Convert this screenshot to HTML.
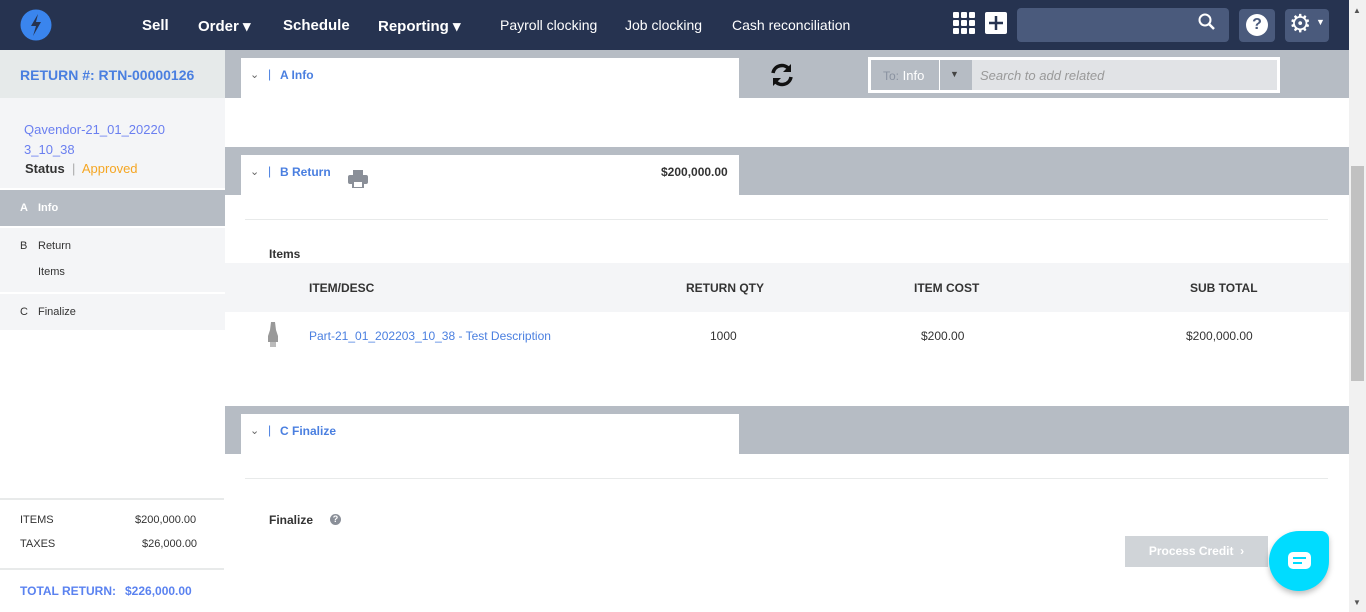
<!DOCTYPE html>
<html><head><style>
*{margin:0;padding:0;box-sizing:border-box}
body{width:1366px;height:612px;overflow:hidden;font-family:"Liberation Sans",sans-serif;background:#fff;position:relative;font-size:12px;color:#333}
.a{position:absolute}
.nav{left:0;top:0;width:1349px;height:50px;background:#263350}
.nv{color:#fff;font-weight:bold;font-size:15px;top:17px}
.nl{color:#fff;font-size:14px;top:17px}
.gb{background:#b6bcc4;left:225px;width:1124px;height:48px}
.tab{background:#fff;left:241px;width:498px;height:40px}
.tt{color:#4a7fe0;font-weight:bold;font-size:12px}
.ch{color:#666;font-size:11px}
.hr{background:#e8eaea;height:1px;left:245px;width:1083px}
.th{font-weight:bold;font-size:12px;color:#333;top:281px}
.sb{font-size:11px;color:#333}
</style></head><body>
<div class="a nav"></div>
<svg class="a" style="left:20px;top:9px" width="32" height="32" viewBox="0 0 32 32"><circle cx="16" cy="16" r="15.5" fill="#3a85ee"/><path d="M18 5 L11 17 L16 17 L13 27 L21 13 L16 13 Z" fill="#263350"/></svg>
<div class="a nv" style="left:142px">Sell</div>
<div class="a nv" style="left:198px">Order ▾</div>
<div class="a nv" style="left:283px">Schedule</div>
<div class="a nv" style="left:378px">Reporting ▾</div>
<div class="a nl" style="left:500px">Payroll clocking</div>
<div class="a nl" style="left:625px">Job clocking</div>
<div class="a nl" style="left:732px">Cash reconciliation</div>
<svg class="a" style="left:953px;top:12px" width="22" height="22"><g fill="#fff"><rect x="0" y="0" width="6" height="6" rx="1"/><rect x="8" y="0" width="6" height="6" rx="1"/><rect x="16" y="0" width="6" height="6" rx="1"/><rect x="0" y="8" width="6" height="6" rx="1"/><rect x="8" y="8" width="6" height="6" rx="1"/><rect x="16" y="8" width="6" height="6" rx="1"/><rect x="0" y="16" width="6" height="6" rx="1"/><rect x="8" y="16" width="6" height="6" rx="1"/><rect x="16" y="16" width="6" height="6" rx="1"/></g></svg>
<svg class="a" style="left:985px;top:12px" width="22" height="22"><rect width="22" height="22" rx="2" fill="#fff"/><path d="M11 4V18M4 11H18" stroke="#263350" stroke-width="2.5"/></svg>
<div class="a" style="left:1017px;top:8px;width:212px;height:34px;background:#4a5a7c;border-radius:4px"></div>
<svg class="a" style="left:1198px;top:13px" width="18" height="18"><circle cx="7" cy="7" r="5.5" stroke="#fff" stroke-width="2" fill="none"/><path d="M11 11L16 16" stroke="#fff" stroke-width="2.5"/></svg>
<div class="a" style="left:1239px;top:9px;width:36px;height:33px;background:#4a5a7c;border-radius:4px"></div>
<div class="a" style="left:1246px;top:14px;width:22px;height:22px;border-radius:50%;background:#fff;color:#4a5a7c;font-weight:bold;font-size:16px;text-align:center;line-height:22px">?</div>
<div class="a" style="left:1285px;top:9px;width:44px;height:33px;background:#4a5a7c;border-radius:4px"></div>
<div class="a" style="left:1289px;top:9px;color:#fff;font-size:25px">⚙</div>
<div class="a" style="left:1316px;top:17px;color:#fff;font-size:9px">▼</div>
<!-- scrollbar -->
<div class="a" style="left:1349px;top:0;width:17px;height:612px;background:#f1f1f1"></div>
<div class="a" style="left:1351px;top:166px;width:13px;height:215px;background:#c1c1c1"></div>
<div class="a" style="left:1353px;top:6px;font-size:8px;color:#555">▲</div>
<div class="a" style="left:1353px;top:598px;font-size:8px;color:#555">▼</div>
<!-- sidebar -->
<div class="a" style="left:0;top:50px;width:225px;height:48px;background:#e6eaea"></div>
<div class="a" style="left:20px;top:67px;color:#4a7fe0;font-weight:bold;font-size:14px">RETURN #: RTN-00000126</div>
<div class="a" style="left:0;top:98px;width:225px;height:90px;background:#f4f5f7"></div>
<div class="a" style="left:24px;top:120px;color:#6a7ff0;font-size:13px;line-height:20px">Qavendor-21_01_20220<br>3_10_38</div>
<div class="a" style="left:25px;top:161px;font-size:13px"><b style="color:#333">Status</b> <span style="color:#aaa">&nbsp;|&nbsp;</span> <span style="color:#f5a623">Approved</span></div>
<div class="a" style="left:0;top:190px;width:225px;height:36px;background:#b6bcc4"></div>
<div class="a sb" style="left:20px;top:202px;color:#fff;font-weight:bold">A</div>
<div class="a sb" style="left:38px;top:202px;color:#fff;font-weight:bold">Info</div>
<div class="a" style="left:0;top:228px;width:225px;height:64px;background:#f4f5f7"></div>
<div class="a sb" style="left:20px;top:240px">B</div><div class="a sb" style="left:38px;top:240px">Return</div>
<div class="a sb" style="left:38px;top:266px">Items</div>
<div class="a" style="left:0;top:294px;width:225px;height:36px;background:#f4f5f7"></div>
<div class="a sb" style="left:20px;top:306px">C</div><div class="a sb" style="left:38px;top:306px">Finalize</div>
<div class="a" style="left:0;top:498px;width:224px;height:2px;background:#e8eaea"></div>
<div class="a sb" style="left:20px;top:514px">ITEMS</div><div class="a sb" style="left:135px;top:514px">$200,000.00</div>
<div class="a sb" style="left:20px;top:538px">TAXES</div><div class="a sb" style="left:142px;top:538px">$26,000.00</div>
<div class="a" style="left:0;top:568px;width:224px;height:2px;background:#e8eaea"></div>
<div class="a" style="left:20px;top:584px;color:#5a82f0;font-size:12px;font-weight:bold">TOTAL RETURN:</div>
<div class="a" style="left:125px;top:584px;color:#5a82f0;font-size:12px;font-weight:bold">$226,000.00</div>
<!-- main -->
<div class="a gb" style="top:50px"></div>
<div class="a tab" style="top:58px"></div>
<div class="a ch" style="left:250px;top:68px">⌄</div><div class="a" style="left:268px;top:67px;color:#4a7fe0">|</div>
<div class="a tt" style="left:280px;top:68px">A Info</div>
<svg class="a" style="left:769px;top:62px" width="26" height="26" viewBox="0 0 26 26"><path d="M4 11A9 9 0 0 1 20 7" stroke="#111" stroke-width="3.5" fill="none"/><path d="M22 2V10H14Z" fill="#111"/><path d="M22 15A9 9 0 0 1 6 19" stroke="#111" stroke-width="3.5" fill="none"/><path d="M4 24V16H12Z" fill="#111"/></svg>
<div class="a" style="left:868px;top:57px;width:412px;height:36px;background:#fff"></div>
<div class="a" style="left:871px;top:60px;width:68px;height:30px;background:#b6bcc4"></div>
<div class="a" style="left:883px;top:68px;font-size:13px;color:#fff"><span style="color:#8a92a0;font-size:12px">To:</span> Info</div>
<div class="a" style="left:940px;top:60px;width:32px;height:30px;background:#b6bcc4"></div>
<div class="a" style="left:950px;top:69px;font-size:9px;color:#444">▼</div>
<div class="a" style="left:972px;top:60px;width:305px;height:30px;background:#e1e3e6"></div>
<div class="a" style="left:980px;top:68px;font-size:13px;color:#999;font-style:italic">Search to add related</div>
<div class="a gb" style="top:147px"></div>
<div class="a tab" style="top:155px"></div>
<div class="a ch" style="left:250px;top:165px">⌄</div><div class="a" style="left:268px;top:164px;color:#4a7fe0">|</div>
<div class="a tt" style="left:280px;top:165px">B Return</div>
<svg class="a" style="left:348px;top:170px" width="20" height="18"><rect x="5" y="0" width="10" height="5" fill="#8a8f98"/><rect x="0" y="5" width="20" height="9" rx="2" fill="#8a8f98"/><rect x="5" y="11" width="10" height="7" fill="#fff" stroke="#8a8f98" stroke-width="2"/></svg>
<div class="a" style="left:661px;top:165px;font-weight:bold;font-size:12px">$200,000.00</div>
<div class="a hr" style="top:219px"></div>
<div class="a" style="left:269px;top:247px;font-size:12px;font-weight:bold;color:#333">Items</div>
<div class="a" style="left:225px;top:263px;width:1124px;height:49px;background:#f4f5f7"></div>
<div class="a th" style="left:309px">ITEM/DESC</div>
<div class="a th" style="left:686px">RETURN QTY</div>
<div class="a th" style="left:914px">ITEM COST</div>
<div class="a th" style="left:1190px">SUB TOTAL</div>
<svg class="a" style="left:266px;top:322px" width="14" height="28"><path d="M5 0H9L10 8L12 14V20H2V14L4 8Z" fill="#999"/><rect x="4" y="20" width="6" height="5" fill="#bbb"/></svg>
<div class="a" style="left:309px;top:329px;color:#4a7fe0;font-size:12px">Part-21_01_202203_10_38 - Test Description</div>
<div class="a" style="left:710px;top:329px;font-size:12px">1000</div>
<div class="a" style="left:921px;top:329px;font-size:12px">$200.00</div>
<div class="a" style="left:1186px;top:329px;font-size:12px">$200,000.00</div>
<div class="a gb" style="top:406px"></div>
<div class="a tab" style="top:414px"></div>
<div class="a ch" style="left:250px;top:424px">⌄</div><div class="a" style="left:268px;top:423px;color:#4a7fe0">|</div>
<div class="a tt" style="left:280px;top:424px">C Finalize</div>
<div class="a hr" style="top:478px"></div>
<div class="a" style="left:269px;top:513px;font-size:12px;font-weight:bold;color:#333">Finalize</div>
<div class="a" style="left:330px;top:514px;width:11px;height:11px;border-radius:50%;background:#8a8f98;color:#fff;font-size:9px;font-weight:bold;text-align:center;line-height:11px">?</div>
<div class="a" style="left:1125px;top:536px;width:143px;height:31px;background:#d0d4d8;color:#fff;font-weight:bold;font-size:12px;text-align:center;line-height:31px">Process Credit &nbsp;›</div>
<div class="a" style="left:1269px;top:531px;width:60px;height:60px;background:#00dcff;border-radius:50% 8px 50% 50%;box-shadow:0 3px 6px rgba(0,0,0,.25)"></div>
<div class="a" style="left:1288px;top:552px;width:23px;height:17px;background:#fff;border-radius:5px"></div>
<div class="a" style="left:1293px;top:557px;width:13px;height:2px;background:#00dcff"></div>
<div class="a" style="left:1293px;top:562px;width:9px;height:2px;background:#00dcff"></div>
</body></html>
